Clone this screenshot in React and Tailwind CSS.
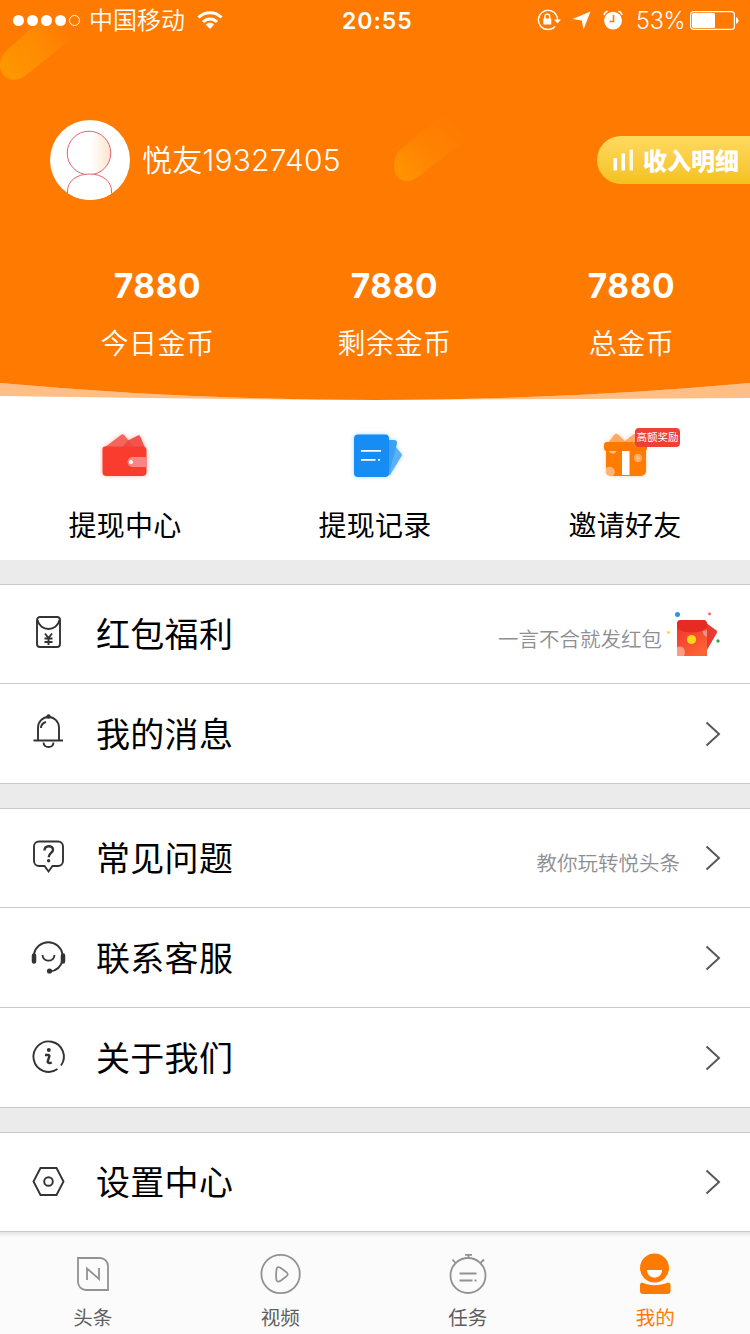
import React from 'react';

const StatusBar = () => (
  <div className="relative flex items-center h-10 text-white">
    <div className="flex items-center gap-[3px] ml-[13px]">
      <span className="w-[11px] h-[11px] rounded-full bg-white" />
      <span className="w-[11px] h-[11px] rounded-full bg-white" />
      <span className="w-[11px] h-[11px] rounded-full bg-white" />
      <span className="w-[11px] h-[11px] rounded-full bg-white" />
      <span className="w-[11px] h-[11px] rounded-full border border-white" />
    </div>
    <span className="mt-0.5 ml-[9px] text-2xl font-[350]">中国移动</span>
    <svg className="ml-3 w-[26px] h-5" viewBox="0 0 26 20" fill="none" stroke="white" strokeWidth="3">
      <path d="M1.5 7.5C8 1 18 1 24.5 7.5" />
      <path d="M6 12C10 8 16 8 20 12" />
      <path d="M8.8 14.5C11 12 15 12 17.2 14.5L13 19z" fill="white" stroke="none" />
    </svg>
    <span className="mt-0.5 ml-[119px] w-[72px] text-[23px] font-semibold tracking-[1px] whitespace-nowrap">20:55</span>

    <svg className="ml-auto w-[24px] h-[22px]" viewBox="0 0 24 22" fill="none" stroke="white" strokeWidth="1.4">
      <path d="M19.5 6.5A9.6 9.6 0 1 0 18 17.5M19.5 6.5C20.3 8 20.6 9.3 20.5 11" />
      <path d="M17 10.5h7l-3.5 4z" fill="white" stroke="none" />
      <rect x="6.3" y="9.5" width="8" height="6" rx="0.6" fill="white" stroke="none" />
      <path d="M7.9 10V7.5a2.4 2.4 0 0 1 4.8 0V10" />
    </svg>
    <svg className="ml-[11px] w-[19px] h-[19px]" viewBox="0 0 19 19" fill="white">
      <path d="M18.5 0.5L11.5 18.5L9.8 9.5L0.5 8z" />
    </svg>
    <svg className="ml-3 w-5 h-5" viewBox="0 0 20 20">
      <circle cx="10" cy="10.6" r="8.9" fill="white" />
      <path d="M1 5A5 5 0 0 1 4.600 1.300M19 5A5 5 0 0 0 15.400 1.300" fill="none" stroke="white" strokeWidth="1.600" />
      <path d="M10.500 5v6.500H6.500" fill="none" stroke="#fe7a00" strokeWidth="1.600" />
    </svg>
    <span className="mt-0.5 ml-[13px] w-[49px] text-[23.500px] font-[350] tracking-[-0.300px] whitespace-nowrap">53%</span>
    <svg className="ml-[5px] mr-[11px] w-[49px] h-[19px]" viewBox="0 0 49 19">
      <rect x="0.6" y="0.6" width="43.8" height="17.8" rx="3" fill="none" stroke="white" strokeWidth="1.2" />
      <rect x="2" y="2" width="23" height="15" rx="1.5" fill="white" />
      <path d="M46 6.3c3.4 0.6 3.4 5.8 0 6.4z" fill="white" />
    </svg>
  </div>
);

// Comets and the curved bottom edge behind the header content
const HeaderBackground = () => (
  <svg className="absolute inset-0 w-[750px] h-[400px]" viewBox="0 0 750 400">
    <defs>
      <linearGradient id="comet1" gradientUnits="userSpaceOnUse" x1="8" y1="74" x2="72" y2="30">
        <stop offset="0" stopColor="#ff9600" />
        <stop offset="0.5" stopColor="#ff8b03" />
        <stop offset="1" stopColor="#fe7a00" />
      </linearGradient>
      <linearGradient id="comet2" gradientUnits="userSpaceOnUse" x1="400" y1="180" x2="462" y2="124">
        <stop offset="0" stopColor="#ff9500" />
        <stop offset="0.4" stopColor="#ff8503" />
        <stop offset="1" stopColor="#fe7a00" />
      </linearGradient>
    </defs>
    <path d="M0 383Q187 400 375 400Q563 400 750 383V398Q563 399 375 400Q187 399 0 396z" fill="#ffbe85" />
    <path d="M0 0H750V383Q563 400 375 400Q187 400 0 383z" fill="#fe7a00" />
    <path d="M5 52L38 22L88 26L25 76C14 84 0 79 0 65C0 60 2 55 5 52z" fill="url(#comet1)" />
    <path d="M400 150L440 117L482 128L418 177C408 185 394 181 394 166C394 160 396 154 400 150z" fill="url(#comet2)" />
  </svg>
);

const Avatar = () => (
  <svg className="w-20 h-20" viewBox="0 0 80 80">
    <defs>
      <linearGradient id="face" x1="0" x2="1" y1="0" y2="0">
        <stop offset="0.55" stopColor="#fff" />
        <stop offset="1" stopColor="#ffe3cc" />
      </linearGradient>
      <clipPath id="round">
        <circle cx="40" cy="40" r="40" />
      </clipPath>
    </defs>
    <circle cx="40" cy="40" r="40" fill="white" />
    <g clipPath="url(#round)" stroke="#e0646e" strokeWidth="1">
      <circle cx="39" cy="33" r="21.8" fill="url(#face)" />
      <path d="M17.5 82V71C17.5 61 27 54 39.5 54S61.5 61 61.5 71V82" fill="white" />
    </g>
  </svg>
);

const WalletIcon = () => (
  <svg className="w-[50px] h-[50px] drop-shadow-[0_0_2px_#ffb4aa]" viewBox="0 0 50 50">
    <path d="M4 18L21 5Q22.500 3.500 24 5L35 18z" fill="#f4655c" />
    <path d="M22 18L27 11L38 5.500Q39.500 5 40 6L46 20z" fill="#f0544d" />
    <path d="M24 5L29 10L22 18H34L28.500 9.500z" fill="#ee4a42" />
    <path d="M5 16.500H42.500a4 4 0 0 1 4 4V42a4 4 0 0 1-4 4H6.500a4 4 0 0 1-4-4V19a2.500 2.500 0 0 1 2.500-2.500z" fill="#f93c2e" />
    <path d="M47 27H32.500a5 5 0 0 0 0 10H47z" fill="#fb8584" />
    <circle cx="31" cy="32" r="2" fill="white" />
  </svg>
);

const RecordIcon = () => (
  <svg className="w-[50px] h-[50px] overflow-visible drop-shadow-[0_0_2px_#a9d5fb]" viewBox="0 0 50 50">
    <path d="M40 14L45 16L51.500 24Q52.300 25 51.500 26L40 45L33 46z" fill="#5bb0f5" />
    <path d="M33 10H44a3 3 0 0 1 3 3L39 44H33z" fill="#3b9ff3" />
    <rect x="4" y="4.500" width="35" height="42.500" rx="4" fill="#158df5" />
    <path d="M11 20.800H31M11 29.800H25.500M28 29.800h2" stroke="white" strokeWidth="1.800" />
  </svg>
);

const GiftIcon = () => (
  <div className="relative w-[50px] h-[50px]">
    <svg className="w-[50px] h-[50px] drop-shadow-[0_0_2px_#ffd4b0]" viewBox="0 0 50 50">
      <path d="M8 13L14 5Q16 3 18.500 5L25 11L34 4Q38 2 42 13z" fill="#ffa764" />
      <path d="M6 20H46V41a5 5 0 0 1-5 5H11a5 5 0 0 1-5-5z" fill="#ff7b02" />
      <rect x="4" y="12" width="43" height="9" rx="3" fill="#fb7902" />
      <path d="M9 21a4 4 0 0 0 7.500 0z" fill="#ffc08a" />
      <circle cx="38" cy="28" r="4.200" fill="#ffa75a" />
      <circle cx="38" cy="28" r="2" fill="#ffbd80" />
      <path d="M6 38a4.500 4.500 0 1 1 7 8h-2a5 5 0 0 1-5-5z" fill="#ffb477" />
      <rect x="22" y="21" width="7.500" height="24" fill="white" />
    </svg>
    <span className="absolute left-[35px] top-[-2px] w-[45px] h-[19px] rounded bg-[#ee4035] text-white text-[10.500px] leading-[20px] text-center whitespace-nowrap">
      高额奖励
    </span>
  </div>
);

const EnvelopeIcon = () => (
  <>
    <rect x="7" y="2" width="23" height="30" rx="3" />
    <path d="M7.500 5C10 17 27 17 29.500 5" />
    <path d="M15 18.500l3.500 4.500l3.500-4.500M18.500 23v7M14.500 23.500h8M14.500 27h8" />
  </>
);

const BellIcon = () => (
  <>
    <path d="M8 26.500V13.500a10.500 10.500 0 0 1 21 0V26.500M3.500 26.500H33" />
    <path d="M11 14c0-3 1.500-5 5-6M13.500 28.500c0.500 6 9.500 6 10 0" />
    <circle cx="18.500" cy="2.500" r="1.300" fill="#333" />
  </>
);

const QuestionIcon = () => (
  <>
    <path d="M9 2.500H28a5 5 0 0 1 5 5V22a5 5 0 0 1-5 5H22.500L18.500 32.500L14.500 27H9a5 5 0 0 1-5-5V7.500a5 5 0 0 1 5-5z" />
    <path d="M14.500 11.500c0-5.500 8.500-5.500 8.500-0.800c0 3.300-4.300 3.300-4.300 7.500" strokeWidth="2.400" />
    <circle cx="18.600" cy="21.800" r="1.700" fill="#333" stroke="none" />
  </>
);

const ServiceIcon = () => (
  <>
    <path d="M4 16A14.500 14.500 0 0 1 32.500 16M32.500 22C31 29 26 33 19.500 33.500M12.500 17c0.500 7.500 11.500 7.500 12 0" />
    <path d="M4 17.500v6M33 17.500v6" strokeWidth="4.500" strokeLinecap="round" />
    <circle cx="19.500" cy="33" r="2.600" fill="#333" stroke="none" />
  </>
);

const InfoIcon = () => (
  <>
    <path d="M27.500 31A15.200 15.200 0 1 1 31 27.500" />
    <circle cx="18.800" cy="12" r="2" fill="#333" stroke="none" />
    <path d="M15 17h3.500c1 0 1 1 0.700 2l-1.400 4c-0.500 2 1.500 2.500 4 1.500" strokeWidth="2.400" />
  </>
);

const SettingIcon = () => (
  <>
    <path d="M10.500 5H26.500L33.500 18.500L26.500 32H10.500L3.500 18.500z" />
    <circle cx="18.500" cy="18.500" r="4.300" />
  </>
);

const RedPacket = () => (
  <svg className="ml-1.5 w-[54px] h-[48px] -mt-1" viewBox="0 0 54 48">
    <defs>
      <linearGradient id="packet" x1="0" y1="0" x2="0.6" y2="1">
        <stop offset="0" stopColor="#ef3029" />
        <stop offset="1" stopColor="#fb6235" />
      </linearGradient>
    </defs>
    <path d="M38 14L49.500 22.500Q50.500 23.500 49.800 25L40 42z" fill="#e93a32" />
    <path d="M14 12H36a4 4 0 0 1 4 4V48H10V16a4 4 0 0 1 4-4z" fill="url(#packet)" />
    <path d="M10 20V16a4 4 0 0 1 4-4H36a4 4 0 0 1 4 4V20C33 26 17 26 10 20z" fill="#e72a24" />
    <path d="M10 39.500c5-3 10 2 7 8.500H10z" fill="#ff9a85" />
    <path d="M35.500 23c2 0 3-1 4.500-1V29c-3-1-4-3-4.500-6z" fill="#f58f82" />
    <circle cx="24.500" cy="31.500" r="4.600" fill="#ffd41c" />
    <circle cx="10.500" cy="6.500" r="2.500" fill="#2c93e5" />
    <circle cx="42.500" cy="6" r="1.400" fill="#f2616b" />
    <circle cx="1.500" cy="24.500" r="1.400" fill="#ffd23c" />
    <circle cx="51" cy="33" r="1.700" fill="#2fa84f" />
  </svg>
);

const Chevron = () => (
  <svg className="w-4 h-[26px]" viewBox="0 0 16 26" fill="none" stroke="#58585a" strokeWidth="2">
    <path d="M1.500 1.500L14 13L1.500 24.500" />
  </svg>
);

const stats = [
  { label: '今日金币', value: 7880 },
  { label: '剩余金币', value: 7880 },
  { label: '总金币', value: 7880 },
];

const actions = [
  { label: '提现中心', icon: <WalletIcon /> },
  { label: '提现记录', icon: <RecordIcon /> },
  { label: '邀请好友', icon: <GiftIcon /> },
];

const sections = [
  [
    { label: '红包福利', icon: <EnvelopeIcon />, hint: '一言不合就发红包', packet: true },
    { label: '我的消息', icon: <BellIcon /> },
  ],
  [
    { label: '常见问题', icon: <QuestionIcon />, hint: '教你玩转悦头条' },
    { label: '联系客服', icon: <ServiceIcon /> },
    { label: '关于我们', icon: <InfoIcon /> },
  ],
  [{ label: '设置中心', icon: <SettingIcon /> }],
];

const tabs = [
  {
    label: '头条',
    icon: (
      <g fill="none" stroke="#929292" strokeWidth="1.800">
        <path d="M6 5H28a8 8 0 0 1 8 8V37H14a8 8 0 0 1-8-8z" />
        <path d="M15 27V15.500L27 26V15" />
      </g>
    ),
  },
  {
    label: '视频',
    icon: (
      <g fill="none" stroke="#929292" strokeWidth="1.800">
        <circle cx="21.600" cy="21" r="19.200" />
        <path d="M17.500 17C17.500 14 19 13.500 21.500 14.800L26.500 18.500C29.500 20.500 29.500 22 26.500 24L22 27.500C19 29.500 17.500 29 17.300 26C17 23 17 20 17.500 17z" />
      </g>
    ),
  },
  {
    label: '任务',
    icon: (
      <g fill="none" stroke="#929292" strokeWidth="1.800">
        <circle cx="21" cy="22.500" r="17.500" />
        <path d="M18 1.800h7M21.500 2v3M5.500 6.500l3.500 4M37 6.500l-4 4M12.500 20.500h17M12.500 27.500h13M27.500 27.500h2" />
      </g>
    ),
  },
  {
    label: '我的',
    active: true,
    icon: (
      <g fill="#fe7a00">
        <circle cx="20.500" cy="15" r="14.500" />
        <path d="M13 17H28C28 27 13 27 13 17z" fill="white" />
        <path d="M8 29.500C16 33 25 33 34 29.500a2.500 2.500 0 0 1 2.500 2.500V38a3 3 0 0 1-3 3H9a3 3 0 0 1-3-3V32a2.500 2.500 0 0 1 2-2.500z" />
      </g>
    ),
  },
];

const MenuRow = ({ item, first }) => (
  <div className={`flex items-center h-[100px] pl-[29.500px] bg-white border-b border-[#c8c7cc] ${first ? 'border-t' : ''}`}>
    <svg className="w-[37px] h-[37px] -mt-0.5" viewBox="0 0 37 37" fill="none" stroke="#333" strokeWidth="1.900">
      {item.icon}
    </svg>
    <span className="mt-px ml-[29.500px] text-[34px] tracking-[0.300px]">{item.label}</span>
    <div className="flex items-center ml-auto mr-[29px]">
      {item.hint && (
        <span className="mt-3 -mr-px text-[20.500px] font-[350] text-[#8e8e93]">{item.hint}</span>
      )}
      {item.packet ? (
        <RedPacket />
      ) : (
        <div className="flex ml-[26px]">
          <Chevron />
        </div>
      )}
    </div>
  </div>
);

const App = () => {
  return (
    <div className="flex flex-col w-[750px] h-[1334px] overflow-hidden bg-[#ebebeb] text-black font-[Inter,'Noto_Sans_CJK_SC',sans-serif]">
      {/* Header */}
      <header className="relative h-[400px] bg-white text-white">
        <HeaderBackground />
        <div className="relative">
          <StatusBar />
          <div className="flex items-center h-20 mt-20 pl-[50px]">
            <Avatar />
            <span className="ml-3 text-[30px] font-[350] tracking-[0.200px] whitespace-nowrap">悦友19327405</span>
            <div className="flex items-center ml-auto w-[153px] h-12 pl-4 rounded-l-full bg-gradient-to-b from-[#ffda5d] to-[#f3c21b]">
              <svg className="w-[22px] h-[22px]" viewBox="0 0 22 22" fill="white">
                <rect x="0.500" y="9" width="3.500" height="12.500" />
                <rect x="8.500" y="4.500" width="3.500" height="17" />
                <rect x="16.500" y="0.500" width="3.500" height="21" opacity="0.85" />
              </svg>
              <span className="mt-1 ml-2 text-2xl font-black whitespace-nowrap">收入明细</span>
            </div>
          </div>
          <div className="flex justify-between mt-[66px] pl-[39px]">
            {stats.map((stat) => (
              <div key={stat.label} className="flex flex-col items-center w-[237px]">
                <span className="text-[33.500px] leading-10 font-[650] tracking-[0.600px]">{stat.value}</span>
                <span className="mt-[17px] text-[28px] leading-[42px] font-[350] tracking-[0.500px]">{stat.label}</span>
              </div>
            ))}
          </div>
        </div>
      </header>

      {/* Quick actions */}
      <div className="grid grid-cols-3 h-40 pt-[30px] bg-white">
        {actions.map((action) => (
          <div key={action.label} className="flex flex-col items-center">
            {action.icon}
            <span className="mt-[25px] text-[28px] leading-[42px] tracking-[0.300px]">{action.label}</span>
          </div>
        ))}
      </div>

      {/* Menu */}
      {sections.map((items) => (
        <div key={items[0].label} className="mt-6">
          {items.map((item, i) => (
            <MenuRow key={item.label} item={item} first={i === 0} />
          ))}
        </div>
      ))}

      {/* Tab bar */}
      <nav className="flex flex-1 bg-gradient-to-b from-[#e4e4e4] via-[#fbfbfb] via-5% to-[#fbfbfb]">
        {tabs.map((tab) => (
          <div key={tab.label} className="flex flex-col items-center flex-1 pt-[21px] pr-[2px]">
            <svg className="w-[42px] h-[42px]" viewBox="0 0 42 42">
              {tab.icon}
            </svg>
            <span className={`mt-2 text-[19.500px] leading-[30px] ${tab.active ? 'text-[#fe7a00]' : 'text-[#5e5e5e]'}`}>
              {tab.label}
            </span>
          </div>
        ))}
      </nav>
    </div>
  );
};

export default App;
